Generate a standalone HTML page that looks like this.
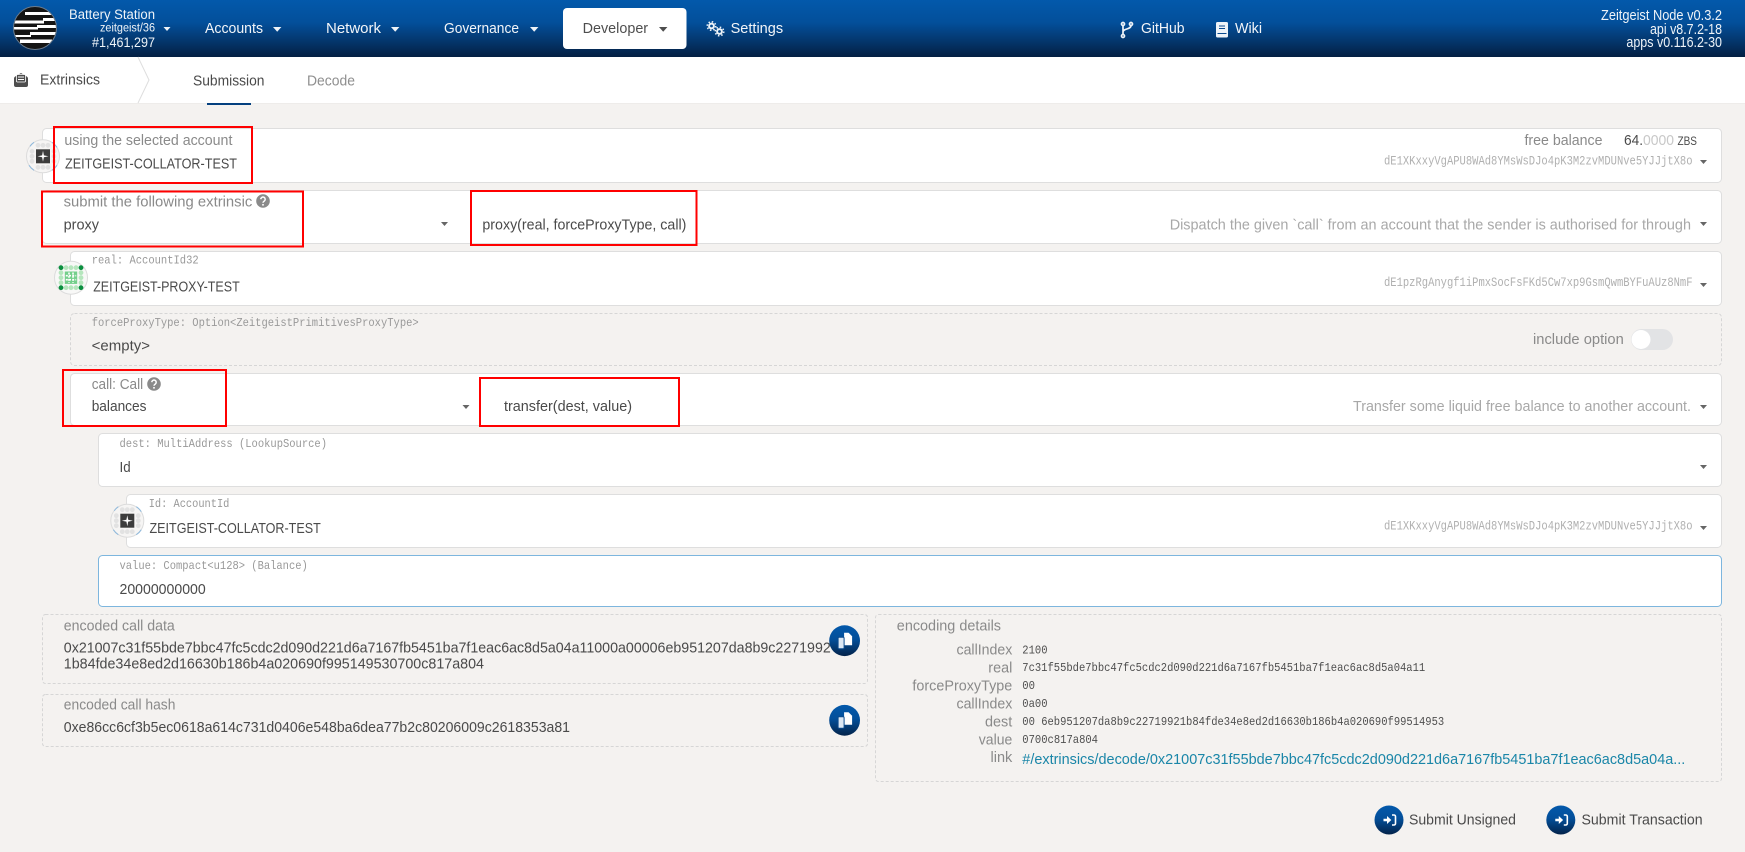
<!DOCTYPE html>
<html lang="en"><head><meta charset="utf-8"><title>Extrinsics</title>
<style>
html,body{margin:0;padding:0;background:#f4f2f0;overflow:hidden}
svg{display:block}
text{font-family:"Liberation Sans",sans-serif;font-size:14.6px;fill:#4a4a4a}
.m{font-family:"Liberation Mono",monospace;font-size:12px;fill:#999}
.v{font-family:"Liberation Mono",monospace;font-size:12px;fill:#4e4e4e}
.a{font-family:"Liberation Mono",monospace;font-size:12.500px;fill:#b0b0b0}
.l{fill:#8a8a8a}
.h{fill:#a8a8a8}
.w{fill:#eef3f8}
.n{fill:#f2f5f9;font-size:15px}
.box{fill:#fff;stroke:#dedede}
.dash{fill:none;stroke:#d6d6d6;stroke-dasharray:3 2}
.red{fill:none;stroke:#f00;stroke-width:2}
</style></head><body>
<svg xmlns="http://www.w3.org/2000/svg" width="1745" height="852" viewBox="0 0 1745 852">
<defs>
<linearGradient id="hg" x1="0" y1="0" x2="0" y2="1"><stop offset="0" stop-color="#0359ab"/><stop offset=".4" stop-color="#034f9a"/><stop offset=".75" stop-color="#043468"/><stop offset="1" stop-color="#031f42"/></linearGradient>
<linearGradient id="bg" x1="0" y1="0" x2="0" y2="1"><stop offset="0" stop-color="#0359ab"/><stop offset=".45" stop-color="#034f9a"/><stop offset="1" stop-color="#03234a"/></linearGradient>
<clipPath id="lc"><circle cx="35" cy="28" r="21"/></clipPath>
<polygon id="c" points="0,0 7,0 3.500,4"/>
<g id="idg">
<circle r="16.500" fill="#f6f5f4" stroke="#dcdcdc"/>
<path d="M-13-10A16.500 16.500 0 0 1-9-14M9-14A16.500 16.500 0 0 1 14-9M14 9A16.500 16.500 0 0 1 9 14M-9 14A16.500 16.500 0 0 1-14 9" fill="none" stroke="#8fb9dc"/>
<g fill="#e2e2e2"><circle cx="-5" cy="-11" r="2.400"/><circle cy="-11" r="2.400"/><circle cx="5" cy="-11" r="2.400"/><circle cx="-5" cy="11" r="2.400"/><circle cy="11" r="2.400"/><circle cx="5" cy="11" r="2.400"/><circle cx="-11" cy="-5" r="2.400"/><circle cx="-11" r="2.400"/><circle cx="-11" cy="5" r="2.400"/><circle cx="11" cy="-5" r="2.400"/><circle cx="11" r="2.400"/><circle cx="11" cy="5" r="2.400"/></g>
<rect x="-7" y="-7" width="14" height="14" fill="#3c3c3c"/>
<path d="M0-5.500L.9-.9 5.500 0 .9.9 0 5.500-.9.9-5.500 0-.9-.9z" fill="#fff"/>
</g>
<g id="copy"><circle r="15.400" fill="url(#bg)"/><path d="M-.5-8h4.500l3.500 3.500v9h-8z" fill="#fff"/><rect x="-6.500" y="-3.500" width="6" height="11.500" rx="1" fill="#dbe7f3" stroke="#0b4a8c" stroke-width="1"/></g>
<g id="sub"><circle r="14.500" fill="url(#bg)"/><path d="M-5.500-1.300h3.500v-2.700l4.300 4-4.300 4v-2.700h-3.500z" fill="#fff"/><path d="M3-5h2a1.500 1.500 0 0 1 1.500 1.500v7a1.500 1.500 0 0 1-1.500 1.500h-2" fill="none" stroke="#fff" stroke-width="1.600"/></g>
<g id="q"><circle r="6.800" fill="#8a8a8a"/><path d="M-2.200-1.800a2.200 2.200 0 1 1 3.400 1.900c-.9.600-1.200.9-1.200 1.700" fill="none" stroke="#fff" stroke-width="1.500"/><circle cy="3.800" r=".95" fill="#fff"/></g>
</defs>

<!-- top bar -->
<rect width="1745" height="57" fill="url(#hg)"/>
<circle cx="35" cy="28" r="21.500" fill="#141414" stroke="#6d7c8c"/>
<g clip-path="url(#lc)" fill="#fff">
<path d="M25 12h27v3H25z"/>
<path d="M14 20.500h29v-2.500h13v3H44v2.500H14z"/>
<path d="M14 27h23v-2h20v3H38v1.500H14z"/>
<path d="M14 35h16v-3h27v3H31v2H14z"/>
<path d="M20 39.500h32v3.500H20z"/>
</g>
<text class="w" x="69" y="19" textLength="86" lengthAdjust="spacingAndGlyphs" style="font-size:13.500px">Battery Station</text>
<text class="w" x="100" y="31.500" textLength="55" lengthAdjust="spacingAndGlyphs" style="font-size:11.500px">zeitgeist/36</text>
<text class="w" x="92" y="47" textLength="63" lengthAdjust="spacingAndGlyphs" style="font-size:13.500px">#1,461,297</text>
<use href="#c" x="163.500" y="27" fill="#eef3f8"/>
<text class="n" x="205" y="33" textLength="58" lengthAdjust="spacingAndGlyphs">Accounts</text><use href="#c" x="273" y="27" fill="#eef3f8" transform="translate(-54.600 -5.400) scale(1.200)"/>
<text class="n" x="326" y="33" textLength="55" lengthAdjust="spacingAndGlyphs">Network</text><use href="#c" x="391" y="27" fill="#eef3f8" transform="translate(-78.200 -5.400) scale(1.200)"/>
<text class="n" x="444" y="33" textLength="75" lengthAdjust="spacingAndGlyphs">Governance</text><use href="#c" x="530" y="27" fill="#eef3f8" transform="translate(-106 -5.400) scale(1.200)"/>
<rect x="563" y="8" width="123.500" height="41" rx="4" fill="#fff"/>
<text class="n" style="fill:#4e4e4e" x="582.600" y="33" textLength="65.500" lengthAdjust="spacingAndGlyphs">Developer</text><use href="#c" x="659" y="27" fill="#4e4e4e" transform="translate(-131.800 -5.400) scale(1.200)"/>
<g fill="none" stroke="#eef3f8"><circle cx="711.500" cy="26" r="2.400" stroke-width="2"/><circle cx="711.500" cy="26" r="4.300" stroke-width="1.500" stroke-dasharray="1.500 1.900"/><circle cx="719.500" cy="31.500" r="2.400" stroke-width="2"/><circle cx="719.500" cy="31.500" r="4.300" stroke-width="1.500" stroke-dasharray="1.500 1.900"/></g>
<text class="n" x="730.600" y="33" textLength="52.500" lengthAdjust="spacingAndGlyphs">Settings</text>
<g fill="none" stroke="#eef3f8" stroke-width="1.700"><circle cx="1123" cy="24" r="1.500"/><circle cx="1123" cy="36" r="1.500"/><circle cx="1131" cy="24" r="1.500"/><path d="M1123 25.500v9M1131 25.500c0 4-8 3-8 6.500"/></g>
<text class="n" x="1141" y="33" textLength="43.500" lengthAdjust="spacingAndGlyphs">GitHub</text>
<path d="M1217.500 22h9a1.500 1.500 0 0 1 1.500 1.500V36a1.500 1.500 0 0 1-1.500 1.500h-9a1.500 1.500 0 0 1-1.500-1.500V23.500a1.500 1.500 0 0 1 1.500-1.500z" fill="#eef3f8"/><path d="M1217.500 33.500h9M1219 26h6M1219 28.500h6" stroke="#0a4a8e" stroke-width="1"/>
<text class="n" x="1235" y="33" textLength="27" lengthAdjust="spacingAndGlyphs">Wiki</text>
<text class="w" x="1601" y="20" textLength="121" lengthAdjust="spacingAndGlyphs">Zeitgeist Node v0.3.2</text>
<text class="w" x="1650" y="34" textLength="72" lengthAdjust="spacingAndGlyphs">api v8.7.2-18</text>
<text class="w" x="1626.400" y="47" textLength="95.600" lengthAdjust="spacingAndGlyphs">apps v0.116.2-30</text>

<!-- tabs -->
<rect y="57" width="1745" height="46" fill="#fff"/>
<rect y="103" width="1745" height="1" fill="#eeecea"/>
<path d="M138 57l11 23-11 23" fill="none" stroke="#dedede"/>
<path d="M21 73l4 2.500c1.500.8 3 1.500 3 3V85a2 2 0 0 1-2 2H16a2 2 0 0 1-2-2v-6.500c0-1.500 1.500-2.200 3-3z" fill="#4e4e4e"/><rect x="16.500" y="74.500" width="9" height="7.500" rx="1" fill="#4e4e4e" stroke="#fff" stroke-width=".8"/><path d="M18 77h6M18 79.500h6" stroke="#fff"/>
<text x="40" y="84.500" textLength="60" lengthAdjust="spacingAndGlyphs" style="font-size:15px">Extrinsics</text>
<text x="193" y="85.300" textLength="71.500" lengthAdjust="spacingAndGlyphs" style="font-size:15px">Submission</text>
<text x="307" y="85.300" textLength="48" lengthAdjust="spacingAndGlyphs" style="font-size:15px;fill:#8f8f8f">Decode</text>
<rect x="207" y="103" width="44" height="2" fill="#04407f"/>

<!-- row 1 -->
<rect class="box" x="42.500" y="128.500" width="1679" height="54" rx="4"/>
<use href="#idg" x="43" y="156.300"/>
<text class="l" x="64.400" y="145" textLength="168" lengthAdjust="spacingAndGlyphs">using the selected account</text>
<text x="65" y="168.300" textLength="172" lengthAdjust="spacingAndGlyphs">ZEITGEIST-COLLATOR-TEST</text>
<text class="l" x="1524.500" y="145" textLength="78" lengthAdjust="spacingAndGlyphs">free balance</text>
<text x="1624" y="145" textLength="19" lengthAdjust="spacingAndGlyphs">64.</text><text x="1643" y="145" textLength="31" lengthAdjust="spacingAndGlyphs" style="fill:#c8c8c8">0000</text><text x="1677.500" y="145" textLength="19.500" lengthAdjust="spacingAndGlyphs" style="font-size:11.500px">ZBS</text>
<text class="a" x="1384" y="164.300" textLength="308.500" lengthAdjust="spacingAndGlyphs">dE1XKxxyVgAPU8WAd8YMsWsDJo4pK3M2zvMDUNve5YJJjtX8o</text>
<use href="#c" x="1700" y="160" fill="#666"/>

<!-- row 2 -->
<rect class="box" x="42.500" y="190.500" width="1679" height="53" rx="4"/>
<text class="l" x="63.600" y="206.700" textLength="188.700" lengthAdjust="spacingAndGlyphs">submit the following extrinsic</text>
<use href="#q" x="263" y="201"/>
<text x="63.600" y="229.300" textLength="35.400" lengthAdjust="spacingAndGlyphs">proxy</text>
<use href="#c" x="441" y="222" fill="#666"/>
<text x="482.400" y="229.300" textLength="204" lengthAdjust="spacingAndGlyphs">proxy(real, forceProxyType, call)</text>
<text class="h" x="1169.700" y="229.300" textLength="521.300" lengthAdjust="spacingAndGlyphs">Dispatch the given `call` from an account that the sender is authorised for through</text>
<use href="#c" x="1700" y="222" fill="#666"/>

<!-- real -->
<rect class="box" x="70.500" y="251.500" width="1651" height="54" rx="4"/>
<circle cx="71" cy="277.700" r="16.500" fill="#f8f8f7" stroke="#dcdcdc"/>
<g fill="#b5e6bd"><circle cx="66" cy="267.700" r="2.400"/><circle cx="71" cy="267.700" r="2.400"/><circle cx="76" cy="267.700" r="2.400"/><circle cx="66" cy="287.700" r="2.400"/><circle cx="71" cy="287.700" r="2.400"/><circle cx="76" cy="287.700" r="2.400"/><circle cx="61" cy="272.700" r="2.400"/><circle cx="61" cy="277.700" r="2.400"/><circle cx="61" cy="282.700" r="2.400"/><circle cx="81" cy="272.700" r="2.400"/><circle cx="81" cy="277.700" r="2.400"/><circle cx="81" cy="282.700" r="2.400"/></g>
<g fill="#0b8f3f"><circle cx="61" cy="267.700" r="2.400"/><circle cx="81" cy="267.700" r="2.400"/><circle cx="61" cy="287.700" r="2.400"/><circle cx="81" cy="287.700" r="2.400"/></g>
<rect x="64.800" y="271.500" width="12.400" height="12.400" fill="#74cf8b"/>
<path d="M69 272.500v10.400M73 272.500v10.400M65.800 275.700h10.400M65.800 279.700h10.400" stroke="#fff" stroke-width="1.600" stroke-dasharray="2 1.200"/>
<text class="m" x="91.700" y="263.300" textLength="107" lengthAdjust="spacingAndGlyphs">real: AccountId32</text>
<text x="93.200" y="291.700" textLength="146.500" lengthAdjust="spacingAndGlyphs">ZEITGEIST-PROXY-TEST</text>
<text class="a" x="1384" y="286" textLength="308.500" lengthAdjust="spacingAndGlyphs">dE1pzRgAnygf1iPmxSocFsFKd5Cw7xp9GsmQwmBYFuAUz8NmF</text>
<use href="#c" x="1700" y="283" fill="#666"/>

<!-- forceProxyType -->
<rect class="dash" x="70.500" y="313.500" width="1651" height="52" rx="4"/>
<text class="m" x="91.700" y="326" textLength="327" lengthAdjust="spacingAndGlyphs">forceProxyType: Option&lt;ZeitgeistPrimitivesProxyType&gt;</text>
<text x="91.700" y="350.700" textLength="58.300" lengthAdjust="spacingAndGlyphs">&lt;empty&gt;</text>
<text class="l" x="1533" y="344" textLength="90.800" lengthAdjust="spacingAndGlyphs">include option</text>
<rect x="1631" y="329" width="42" height="21" rx="10.500" fill="#e2e3e5"/>
<circle cx="1641" cy="339.500" r="9.500" fill="#fff"/>

<!-- call -->
<rect class="box" x="70.500" y="373.500" width="1651" height="52" rx="4"/>
<text class="l" x="91.700" y="389" textLength="51.500" lengthAdjust="spacingAndGlyphs">call: Call</text>
<use href="#q" x="154" y="384"/>
<text x="91.700" y="411" textLength="54.800" lengthAdjust="spacingAndGlyphs">balances</text>
<use href="#c" x="462.500" y="405" fill="#666"/>
<text x="504" y="411" textLength="128" lengthAdjust="spacingAndGlyphs">transfer(dest, value)</text>
<text class="h" x="1353" y="411" textLength="338" lengthAdjust="spacingAndGlyphs">Transfer some liquid free balance to another account.</text>
<use href="#c" x="1700" y="405" fill="#666"/>

<!-- dest -->
<rect class="box" x="98.500" y="433.500" width="1623" height="53" rx="4"/>
<text class="m" x="119.500" y="447" textLength="207.500" lengthAdjust="spacingAndGlyphs">dest: MultiAddress (LookupSource)</text>
<text x="119.500" y="472" textLength="11.100" lengthAdjust="spacingAndGlyphs">Id</text>
<use href="#c" x="1700" y="465" fill="#666"/>

<!-- Id -->
<rect class="box" x="126.500" y="494.500" width="1595" height="53" rx="4"/>
<use href="#idg" x="127.300" y="520.700"/>
<text class="m" x="148.700" y="507" textLength="80.700" lengthAdjust="spacingAndGlyphs">Id: AccountId</text>
<text x="149.500" y="533" textLength="171.300" lengthAdjust="spacingAndGlyphs">ZEITGEIST-COLLATOR-TEST</text>
<text class="a" x="1384" y="529.300" textLength="308.500" lengthAdjust="spacingAndGlyphs">dE1XKxxyVgAPU8WAd8YMsWsDJo4pK3M2zvMDUNve5YJJjtX8o</text>
<use href="#c" x="1700" y="526" fill="#666"/>

<!-- value -->
<rect x="98.500" y="555.500" width="1623" height="51" rx="4" fill="#fff" stroke="#7db6de"/>
<text class="m" x="119.500" y="569" textLength="188.300" lengthAdjust="spacingAndGlyphs">value: Compact&lt;u128&gt; (Balance)</text>
<text x="119.500" y="594" textLength="86.200" lengthAdjust="spacingAndGlyphs">20000000000</text>

<!-- encoded data -->
<rect class="dash" x="42.500" y="614.500" width="825" height="69" rx="3"/>
<text class="l" x="63.800" y="630.700" textLength="111" lengthAdjust="spacingAndGlyphs">encoded call data</text>
<text x="63.800" y="652.700" textLength="767" lengthAdjust="spacingAndGlyphs">0x21007c31f55bde7bbc47fc5cdc2d090d221d6a7167fb5451ba7f1eac6ac8d5a04a11000a00006eb951207da8b9c2271992</text>
<text x="63.800" y="668.700" textLength="420.200" lengthAdjust="spacingAndGlyphs">1b84fde34e8ed2d16630b186b4a020690f995149530700c817a804</text>
<use href="#copy" x="844.600" y="640.700"/>

<rect class="dash" x="42.500" y="694.500" width="825" height="52" rx="3"/>
<text class="l" x="63.800" y="709.700" textLength="111.600" lengthAdjust="spacingAndGlyphs">encoded call hash</text>
<text x="63.800" y="732" textLength="506.200" lengthAdjust="spacingAndGlyphs">0xe86cc6cf3b5ec0618a614c731d0406e548ba6dea77b2c80206009c2618353a81</text>
<use href="#copy" x="844.600" y="720.300"/>

<!-- details -->
<rect class="dash" x="875.500" y="614.500" width="846" height="167" rx="3"/>
<text class="l" x="896.800" y="630.700" textLength="104.200" lengthAdjust="spacingAndGlyphs">encoding details</text>
<text class="l" x="956.500" y="654.700" textLength="55.800" lengthAdjust="spacingAndGlyphs">callIndex</text>
<text class="l" x="988.300" y="672.700" textLength="24" lengthAdjust="spacingAndGlyphs">real</text>
<text class="l" x="912.400" y="690.700" textLength="99.900" lengthAdjust="spacingAndGlyphs">forceProxyType</text>
<text class="l" x="956.500" y="708.700" textLength="55.800" lengthAdjust="spacingAndGlyphs">callIndex</text>
<text class="l" x="985" y="726.700" textLength="27.300" lengthAdjust="spacingAndGlyphs">dest</text>
<text class="l" x="978.800" y="744.700" textLength="33.500" lengthAdjust="spacingAndGlyphs">value</text>
<text class="l" x="990.500" y="762" textLength="21.800" lengthAdjust="spacingAndGlyphs">link</text>
<text class="v" x="1022.300" y="653.300" textLength="25.200" lengthAdjust="spacingAndGlyphs">2100</text>
<text class="v" x="1022.300" y="671" textLength="402.900" lengthAdjust="spacingAndGlyphs">7c31f55bde7bbc47fc5cdc2d090d221d6a7167fb5451ba7f1eac6ac8d5a04a11</text>
<text class="v" x="1022.300" y="689" textLength="12.700" lengthAdjust="spacingAndGlyphs">00</text>
<text class="v" x="1022.300" y="707" textLength="25.200" lengthAdjust="spacingAndGlyphs">0a00</text>
<text class="v" x="1022.300" y="725" textLength="421.900" lengthAdjust="spacingAndGlyphs">00 6eb951207da8b9c22719921b84fde34e8ed2d16630b186b4a020690f99514953</text>
<text class="v" x="1022.300" y="743" textLength="75.700" lengthAdjust="spacingAndGlyphs">0700c817a804</text>
<text x="1022.300" y="764" textLength="663" lengthAdjust="spacingAndGlyphs" style="fill:#1a86a8">#/extrinsics/decode/0x21007c31f55bde7bbc47fc5cdc2d090d221d6a7167fb5451ba7f1eac6ac8d5a04a...</text>

<!-- buttons -->
<use href="#sub" x="1389" y="820"/>
<text x="1409" y="824.700" textLength="107" lengthAdjust="spacingAndGlyphs">Submit Unsigned</text>
<use href="#sub" x="1560.800" y="820"/>
<text x="1581.500" y="824.700" textLength="121.100" lengthAdjust="spacingAndGlyphs">Submit Transaction</text>

<!-- annotations -->
<rect class="red" x="54" y="127" width="198" height="56"/>
<rect class="red" x="42" y="191.500" width="261" height="55"/>
<rect class="red" x="471" y="191" width="225.500" height="54"/>
<rect class="red" x="63" y="370" width="163" height="56"/>
<rect class="red" x="480" y="378" width="199" height="48"/>
</svg>
</body></html>
